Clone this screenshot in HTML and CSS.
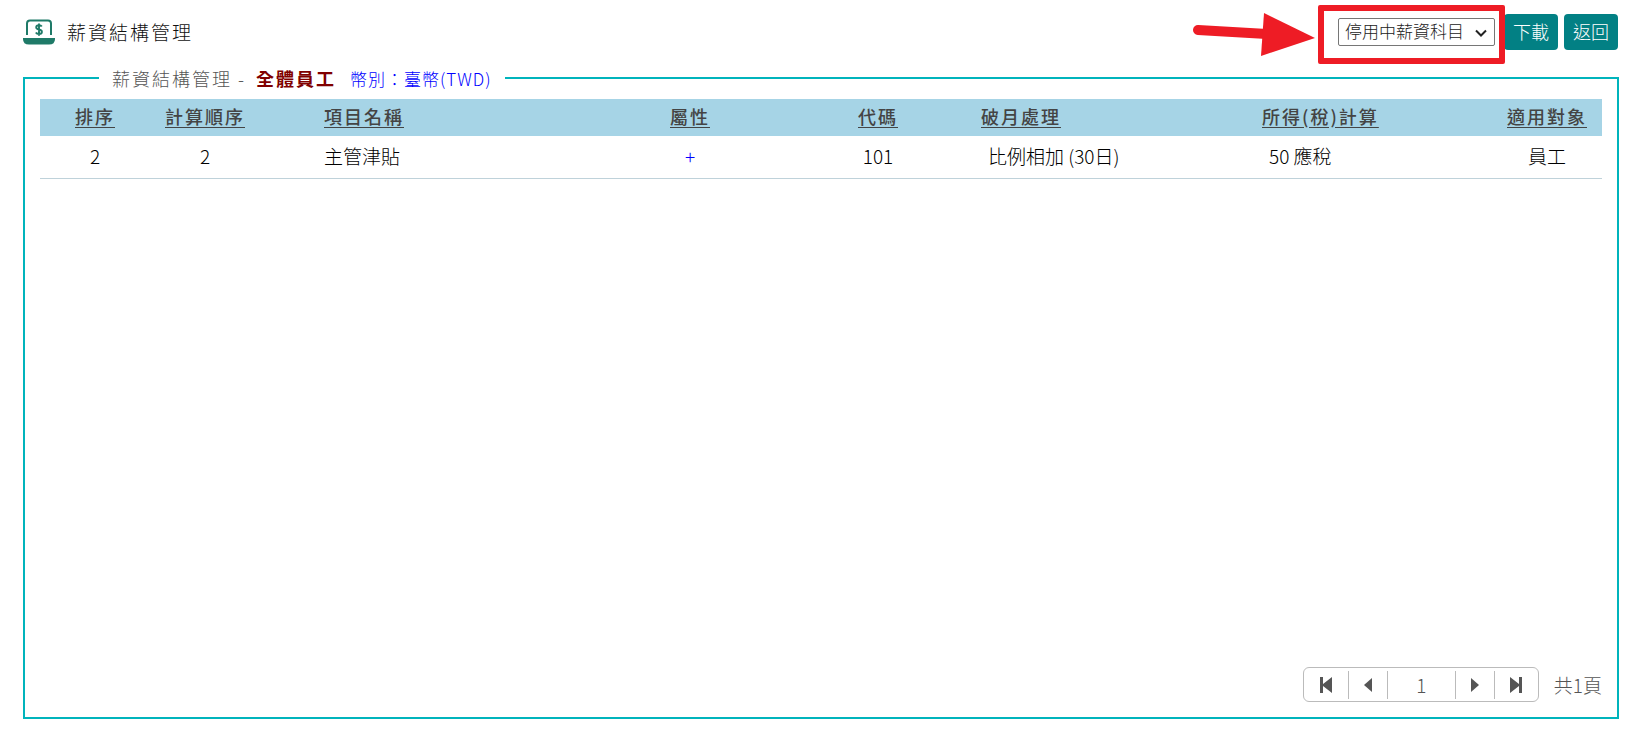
FILE: index.html
```
<!DOCTYPE html>
<html lang="zh-TW">
<head>
    <meta charset="UTF-8">
    <meta name="viewport" content="width=device-width, initial-scale=1.0">
    <title>薪資結構管理</title>
    <link rel="stylesheet" href="styles.css">
</head>
<body>
    <header class="topbar">
        <svg class="logo" viewBox="0 0 32 26" width="32" height="26" aria-hidden="true">
            <path d="M4 16V4.500Q4 1.500 7 1.500H25Q28 1.500 28 4.500V16" fill="none" stroke="#1f7a68" stroke-width="2"/>
            <path d="M0 19H32V20Q32 25.500 26 25.500H6Q0 25.500 0 20Z" fill="#1f7a68"/>
            <path d="M18.800 7.500Q18 6.200 16 6.200Q13.200 6.200 13.200 8.300Q13.200 10 16 10.500Q18.900 11 18.900 12.900Q18.900 15 16 15Q13.800 15 12.800 13.500M16 4.500V16.700" fill="none" stroke="#1f7a68" stroke-width="1.900"/>
        </svg>
        <h1>薪資結構管理</h1>

        <div class="actions">
            <div class="filter">
                <select aria-label="薪資科目">
                    <option>停用中薪資科目</option>
                </select>
                <svg class="chevron" viewBox="0 0 12 8" width="12" height="8" aria-hidden="true">
                    <path d="M1 1.500L6 6.500L11 1.500" fill="none" stroke="#222" stroke-width="2"/>
                </svg>
                <div class="highlight"></div>
                <svg class="arrow" viewBox="0 0 120 46" width="120" height="46" aria-hidden="true">
                    <path d="M3 19L72 23" stroke="#ee1c25" stroke-width="10" stroke-linecap="round"/>
                    <path d="M69 2L120 27L66 45Z" fill="#ee1c25"/>
                </svg>
            </div>
            <button type="button" class="btn">下載</button>
            <button type="button" class="btn">返回</button>
        </div>
    </header>

    <fieldset class="panel">
        <legend>薪資結構管理 - <b>全體員工</b><span class="currency">幣別：臺幣(TWD)</span></legend>

        <div class="list">
            <table>
                <colgroup>
                    <col class="col-s">
                    <col class="col-s">
                    <col class="col-name">
                    <col class="col-attr">
                    <col class="col-code">
                    <col class="col-month">
                    <col class="col-tax">
                    <col class="col-s">
                </colgroup>
                <thead>
                    <tr>
                        <th><a href="#">排序</a></th>
                        <th><a href="#">計算順序</a></th>
                        <th class="name"><a href="#">項目名稱</a></th>
                        <th><a href="#">屬性</a></th>
                        <th><a href="#">代碼</a></th>
                        <th class="left"><a href="#">破月處理</a></th>
                        <th class="left"><a href="#">所得(稅)計算</a></th>
                        <th><a href="#">適用對象</a></th>
                    </tr>
                </thead>
                <tbody>
                    <tr>
                        <td>2</td>
                        <td>2</td>
                        <td class="name">主管津貼</td>
                        <td class="plus">+</td>
                        <td>101</td>
                        <td class="left">比例相加 (30日)</td>
                        <td class="left">50 應稅</td>
                        <td>員工</td>
                    </tr>
                </tbody>
            </table>
        </div>

        <div class="pagination">
            <div class="pager">
                <button type="button" class="end" aria-label="第一頁">
                    <svg viewBox="0 0 12 16" width="12" height="16"><path d="M0 0H3V7L12 0V16L3 9V16H0Z"/></svg>
                </button>
                <button type="button" aria-label="上一頁">
                    <svg viewBox="0 0 8 14" width="8" height="14"><path d="M8 0V14L0 7Z"/></svg>
                </button>
                <input type="text" value="1" aria-label="頁碼">
                <button type="button" aria-label="下一頁">
                    <svg viewBox="0 0 8 14" width="8" height="14"><path d="M0 0V14L8 7Z"/></svg>
                </button>
                <button type="button" class="end" aria-label="最後一頁">
                    <svg viewBox="0 0 12 16" width="12" height="16"><path d="M12 0H9V7L0 0V16L9 9V16H12Z"/></svg>
                </button>
            </div>
            <span>共1頁</span>
        </div>
    </fieldset>
</body>
</html>
```
FILE: styles.css
```
* {
    box-sizing: border-box;
}

body {
    margin: 0;
    padding: 14px 27px 25px 23px;
    background: #fff;
    color: #000;
    font-family: "Noto Sans CJK TC", sans-serif;
    font-size: 19px;
    font-weight: 300;
}

button, input, select {
    font: inherit;
}

.topbar {
    display: flex;
    align-items: center;
    height: 36px;
    margin-bottom: 14px;
    padding-right: 1px;
}

h1 {
    margin: 0 0 0 12px;
    padding-bottom: 2px;
    font-size: 19px;
    font-weight: 300;
    letter-spacing: 2px;
    color: #111;
}

.actions {
    display: flex;
    align-items: center;
    gap: 6px;
    margin-left: auto;
}

.filter {
    position: relative;
    margin-right: 3px;
}

.filter select {
    display: block;
    width: 157px;
    height: 28px;
    padding: 0 6px 2px;
    border: 1px solid #767676;
    border-radius: 2px;
    background: #fff;
    color: #222;
    font-size: 17px;
    line-height: 24px;
    appearance: none;
}

.chevron {
    position: absolute;
    top: 11px;
    right: 8px;
    pointer-events: none;
}

/* red frame and arrow around the filter */
.highlight {
    position: absolute;
    top: -13px;
    right: -10px;
    bottom: -18px;
    left: -20px;
    border: 6px solid #ee1c25;
    border-radius: 2px;
    pointer-events: none;
}

.arrow {
    position: absolute;
    top: -7px;
    right: 180px;
    pointer-events: none;
    overflow: visible;
}

.btn {
    width: 54px;
    height: 36px;
    padding: 0 0 2px;
    border: 0;
    border-radius: 4px;
    background: #028084;
    color: #fff;
    font-size: 18px;
    cursor: pointer;
}

.panel {
    min-width: 0;
    margin: 0;
    padding: 8px 15px 15px;
    border: 2px solid #00b4bc;
}

legend {
    margin-left: 59px;
    padding: 2px 13px 0;
    color: #555;
    font-size: 18px;
    line-height: 24px;
    letter-spacing: 2px;
}

legend b {
    margin-left: 4px;
    color: #800000;
    font-weight: 700;
}

.currency {
    margin-left: 14px;
    color: #00f;
    font-size: 17px;
    letter-spacing: 1px;
}

.list {
    min-height: calc(100vh - 176px);
}

table {
    width: 100%;
    table-layout: fixed;
    border-collapse: collapse;
}

.col-s { width: 110px; }
.col-name { width: 342px; }
.col-attr { width: 176px; }
.col-code { width: 200px; }
.col-month { width: 281px; }
.col-tax { width: 233px; }

th {
    height: 37px;
    padding: 0 0 4px;
    background: #a6d4e6;
    font-size: 18px;
    font-weight: 500;
    letter-spacing: 2px;
}

th a {
    color: #444;
    text-underline-offset: 3px;
}

td {
    height: 42px;
    padding: 0 0 2px;
    border-bottom: 1px solid #bfd2da;
    text-align: center;
}

th.name, td.name {
    padding-left: 64px;
    text-align: left;
}

th.left {
    padding-left: 3px;
    text-align: left;
}

td.left {
    padding-left: 10px;
    text-align: left;
}

.plus {
    color: #00f;
}

.pagination {
    display: flex;
    align-items: center;
    justify-content: flex-end;
    gap: 15px;
    color: #555;
}

.pager {
    display: flex;
    align-items: center;
    height: 35px;
    border: 1px solid #bbb;
    border-radius: 6px;
}

.pager button {
    display: flex;
    align-items: center;
    justify-content: center;
    width: 39px;
    height: 28px;
    padding: 0;
    border: 0;
    background: none;
    cursor: pointer;
}

.pager .end {
    width: 44px;
}

.pager svg {
    fill: #555;
}

.pager button + button, .pager input + button {
    border-left: 1px solid #bbb;
}

.pager input {
    width: 68px;
    height: 28px;
    padding: 0;
    border: 0;
    border-left: 1px solid #bbb;
    outline: 0;
    background: none;
    color: #555;
    text-align: center;
}
```
